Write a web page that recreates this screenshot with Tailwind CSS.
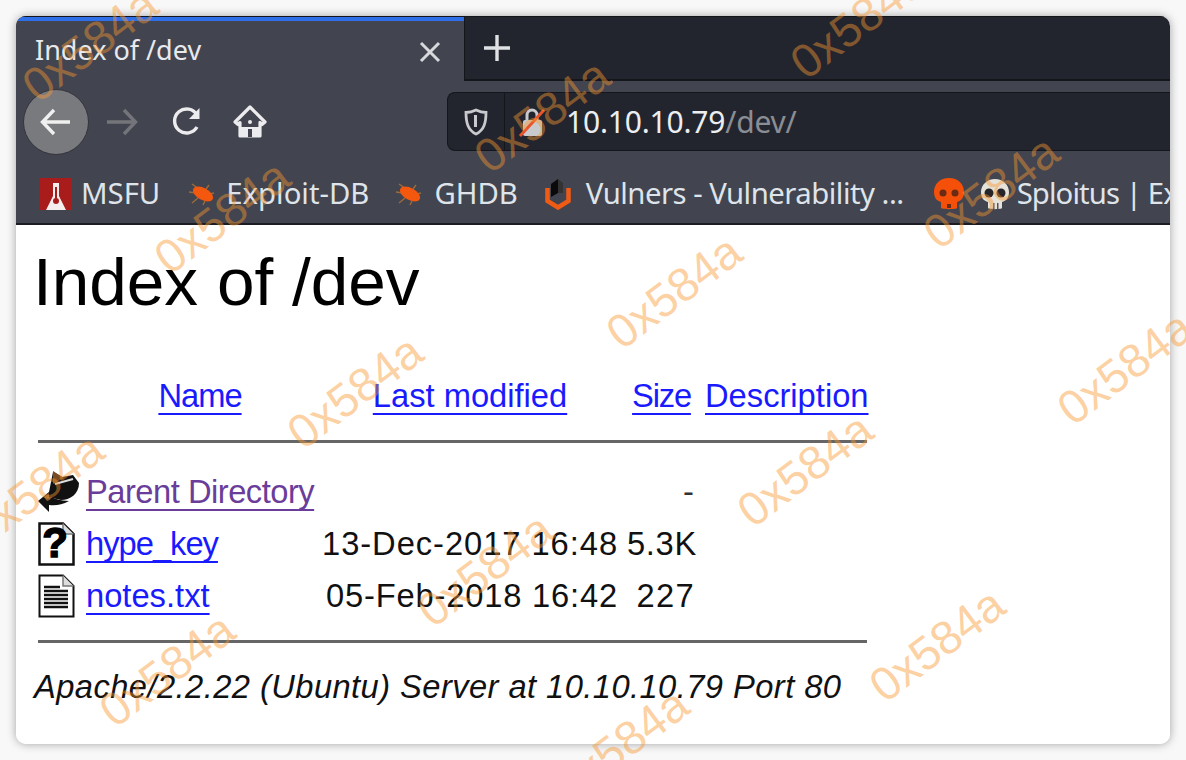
<!DOCTYPE html>
<html>
<head>
<meta charset="utf-8">
<script src="https://cdn.jsdelivr.net/npm/@tailwindcss/browser@4"></script>
</head>
<body class="bg-[#f8f8f8] overflow-hidden">
<div class="relative w-[1186px] h-[760px] p-4 overflow-hidden">
  <div class="w-[1154px] h-[728px] rounded-[10px] overflow-hidden bg-white shadow-[0_0_10px_rgba(0,0,0,0.35)] flex flex-col font-['Liberation_Sans',sans-serif]">
    <!-- tab row -->
    <div class="h-[65px] flex bg-[#23252e] border-t border-[#15161b] shrink-0 font-['Noto_Sans',sans-serif]">
      <div class="w-[448px] bg-[#42444f] border-t-[4px] border-[#2f6fe8] flex items-center pl-[19px] pr-[22px] justify-between">
        <span class="text-[27px] text-[#e8e9ec] mt-[-1px] whitespace-nowrap">Index of /dev</span>
        <svg width="24" height="24" viewBox="0 0 24 24" class="mt-[2px]"><path d="M3 3 21 21M21 3 3 21" stroke="#d8d9dc" stroke-width="3"/></svg>
      </div>
      <div class="flex-1 border-l border-[#15161b] border-b-2 pl-[19px] flex items-center">
        <svg width="26" height="26" viewBox="0 0 26 26"><path d="M13 0V26M0 13H26" stroke="#e0e1e4" stroke-width="3.4"/></svg>
      </div>
    </div>
    <!-- nav row -->
    <div class="h-[71px] bg-[#42444f] flex items-start shrink-0 relative">
      <div class="w-[431px] h-full flex items-center pl-[7px] pt-[11px] shrink-0">
        <div class="w-[66px] h-[66px] rounded-full bg-[#797a7e] border border-[#33343c] flex items-center justify-center">
          <svg width="32" height="28" viewBox="0 0 32 28" fill="none"><path d="M30 14H3M14 2 2.500 14 14 26" stroke="#f0f0f0" stroke-width="3.400"/></svg>
        </div>
        <svg width="32" height="28" viewBox="0 0 32 28" fill="none" class="ml-[17px]"><path d="M1 14H29M18 2 29.500 14 18 26" stroke="#74757b" stroke-width="3.400"/></svg>
        <svg width="32" height="32" viewBox="0 0 32 32" fill="none" class="ml-[33px]"><path d="M26 21A12 12 0 1 1 26 9" stroke="#ececee" stroke-width="3.400"/><path d="M28.500 2V13H18Z" fill="#ececee"/></svg>
        <svg width="34" height="34" viewBox="0 0 34 34" class="ml-[30px]"><path d="M17 2 32 17 29 19.500 27 17.500V31H7V17.500L5 19.500 2 17Z" fill="none" stroke="#ececee" stroke-width="3.200" stroke-linejoin="round"/><path d="M7 22H27V32H7Z" fill="#ececee"/><path d="M15 24h4v8h-4z" fill="#42444f"/><circle cx="17" cy="17" r="2" fill="#ececee"/></svg>
      </div>
      <div class="flex-1 h-[59px] mt-[11px] bg-[#23252e] border border-r-0 border-[#15161b] rounded-l-[8px] flex items-center font-['Noto_Sans',sans-serif]">
        <div class="w-[57px] h-full flex items-center justify-center border-r border-[#15161b] shrink-0">
          <svg width="24" height="28" viewBox="0 0 24 28" fill="none"><path d="M12 2C8 4 5 4.500 2 4.500 2 15 4 22 12 26 20 22 22 15 22 4.500 19 4.500 16 4 12 2Z" stroke="#c9cacd" stroke-width="2.800"/><path d="M11.500 7V19" stroke="#c9cacd" stroke-width="3"/></svg>
        </div>
        <svg width="30" height="32" viewBox="0 0 30 32" class="ml-[12px] shrink-0"><path d="M10 14V9A5 5 0 0 1 20 9V14" fill="none" stroke="#c9cacd" stroke-width="3"/><rect x="6" y="14" width="19" height="16" rx="2" fill="#c9cacd"/><path d="M3 30 27 4" stroke="#e8542a" stroke-width="3"/></svg>
        <span class="ml-[19px] text-[30px] tracking-[-0.2px] text-[#eceef0] whitespace-nowrap">10.10.10.79<span class="text-[#8b8d94]">/dev/</span></span>
      </div>
    </div>
    <!-- bookmarks -->
    <div class="h-[73px] bg-[#42444f] border-b-2 border-[#1c1d22] flex items-center pl-[24px] pt-[12px] shrink-0 overflow-hidden whitespace-nowrap text-[29.300px] text-[#dfe4ea] font-['Noto_Sans',sans-serif]">
      <svg width="32" height="32" viewBox="0 0 32 32" class="shrink-0"><rect width="32" height="32" fill="#a81c1c"/><path d="M13 5h6v13l7 14H6l7-14Z" fill="#f4eeee"/><path d="M15 9h2v12h-2z" fill="#a81c1c"/><circle cx="16" cy="23" r="3" fill="#a81c1c"/></svg>
      <span class="ml-[9px]">MSFU</span>
      <svg width="32" height="28" viewBox="0 0 32 28" class="ml-[27px] shrink-0"><path d="M5 4 12 9M2 12 9 13M5 23 11 18M16 25 18 21M27 13 23 14M22 5 19 9" stroke="#9a6b3c" stroke-width="1.500"/><ellipse cx="16" cy="14" rx="11" ry="6" transform="rotate(28 16 14)" fill="#f4580f"/></svg>
      <span class="ml-[7px]">Exploit-DB</span>
      <svg width="32" height="28" viewBox="0 0 32 28" class="ml-[25px] shrink-0"><path d="M5 4 12 9M2 12 9 13M5 23 11 18M16 25 18 21M27 13 23 14M22 5 19 9" stroke="#9a6b3c" stroke-width="1.500"/><ellipse cx="16" cy="14" rx="11" ry="6" transform="rotate(28 16 14)" fill="#f4580f"/></svg>
      <span class="ml-[8px]">GHDB</span>
      <svg width="26" height="32" viewBox="0 0 26 32" class="ml-[27px] shrink-0"><path d="M13 1 6 6V19L13 15Z" fill="#0a0a0a"/><path d="M13 1 18 5V15H13Z" fill="#333"/><path d="M2.500 10V23L13 29.500 23.500 23V10" fill="none" stroke="#ef5a14" stroke-width="4.500"/></svg>
      <span class="ml-[15px] tracking-[-0.5px]">Vulners - Vulnerability ...</span>
      <svg width="32" height="34" viewBox="0 0 32 34" class="ml-[29px] shrink-0"><path d="M16 1C7 1 1 7 1 15 1 21 4 24 8 25V31C8 32.500 24 32.500 24 31V25C28 24 31 21 31 15 31 7 25 1 16 1Z" fill="#f4500a"/><circle cx="10" cy="16" r="3.500" fill="#6a2a14"/><circle cx="22" cy="16" r="3.500" fill="#6a2a14"/><path d="M14 27h4v4h-4z" fill="#6a2a14"/></svg>
      <svg width="30" height="32" viewBox="0 0 30 32" class="ml-[15px] shrink-0"><path d="M15 1C7 1 1 7 1 14 1 20 4 23 8 24V30C8 31.500 22 31.500 22 30V24C26 23 29 20 29 14 29 7 23 1 15 1Z" fill="#e5e2da"/><circle cx="9" cy="15" r="4.500" fill="#26262a"/><circle cx="21" cy="15" r="4.500" fill="#26262a"/><path d="M13 25h1.500v6H13zM17 25h1.500v6H17z" fill="#555"/></svg>
      <span class="ml-[7px] tracking-[-0.9px]">Sploitus | Exploits</span>
    </div>
    <!-- page -->
    <div class="flex-1 bg-white text-[32.7px] text-[#111] pl-[22px] relative">
      <h1 class="text-[67.5px] leading-[76px] ml-[-5px] mt-[19px] text-black">Index of /dev</h1>
      <div class="grid grid-cols-[40px_228px_296px_71px_162px] gap-x-2 mt-[50px] w-[830px] leading-[52px]">
        <div></div>
        <a class="text-center text-[#1a1aff] tracking-[-1px] underline underline-offset-[6px] decoration-2 [text-decoration-skip-ink:none]">Name</a>
        <a class="text-center text-[#1a1aff] underline underline-offset-[6px] decoration-2 [text-decoration-skip-ink:none]">Last modified</a>
        <a class="text-center text-[#1a1aff] tracking-[-1.2px] underline underline-offset-[6px] decoration-2 [text-decoration-skip-ink:none]">Size</a>
        <a class="text-center text-[#1a1aff] underline underline-offset-[6px] decoration-2 [text-decoration-skip-ink:none]">Description</a>
        <div class="col-span-full h-[3px] bg-[#666] mt-[18px] mb-[23px]"></div>

        <svg width="42" height="44" viewBox="0 0 42 44" class="self-center"><path d="M15 2 24 7 35 5 41 13C41 24 32 30 23 30L10 27Z" fill="#111"/><path d="M15 1l11 7-11 6z" fill="#7a4a22"/><path d="M17 14 35 9" stroke="#ddd" stroke-width="2"/><path d="M0 31 11 22V27C17 28 22 31 31 31 24 35 17 36 11 35V42Z" fill="#111"/><path d="M6 27 11 23V27C14 28 13 30 9 31Z" fill="#8a5a2e"/></svg>
        <a class="text-[#6a3d9a] tracking-[-0.5px] underline underline-offset-[6px] decoration-2 [text-decoration-skip-ink:none] justify-self-start whitespace-nowrap">Parent Directory</a>
        <div></div>
        <div class="text-right pr-[3px] text-[#333]">-</div>
        <div></div>

        <svg width="37" height="44" viewBox="0 0 37 44" class="self-center"><path d="M1.500 1.500H25L35.500 12V42.500H1.500Z" fill="#fff" stroke="#111" stroke-width="2.500"/><path d="M25 1.500V12H35.500" fill="#ddd" stroke="#777" stroke-width="1.500"/><text x="17" y="35" text-anchor="middle" font-family="Liberation Sans" font-weight="700" font-size="42" stroke="#000" stroke-width="1.5" fill="#000">?</text></svg>
        <a class="text-[#1a1aff] tracking-[-1px] underline underline-offset-[6px] decoration-2 [text-decoration-skip-ink:none] justify-self-start">hype_key</a>
        <div class="text-right whitespace-nowrap tracking-[0.95px]">13-Dec-2017 16:48</div>
        <div class="text-right tracking-[0.7px]">5.3K</div>
        <div></div>

        <svg width="37" height="44" viewBox="0 0 37 44" class="self-center"><path d="M1.500 1.500H25L35.500 12V42.500H1.500Z" fill="#fff" stroke="#111" stroke-width="2"/><path d="M25 1.500V12H35.500" fill="#ddd" stroke="#777" stroke-width="1.500"/><path d="M6 13H22M6 17H30M6 21H30M6 25H30M6 29H30M6 33H30" stroke="#111" stroke-width="2.400"/></svg>
        <a class="text-[#1a1aff] underline underline-offset-[6px] decoration-2 [text-decoration-skip-ink:none] justify-self-start">notes.txt</a>
        <div class="text-right whitespace-nowrap tracking-[0.82px]">05-Feb-2018 16:42</div>
        <div class="text-right pr-[2px] tracking-[1.3px]">227</div>
        <div></div>

        <div class="col-span-full h-[3px] bg-[#666] mt-[18px]"></div>
      </div>
      <address class="italic text-[#111] mt-[22px] ml-[-4px] leading-[44px] whitespace-nowrap tracking-[0.43px]">Apache/2.2.22 (Ubuntu) Server at 10.10.10.79 Port 80</address>
    </div>
  </div>

  <!-- watermarks -->
  <span class="absolute left-[90px] top-[45px] -translate-x-1/2 -translate-y-1/2 -rotate-[37deg] text-[47px] font-['Liberation_Sans',sans-serif] text-[#f9982f]/45 pointer-events-none">0x584a</span>
  <span class="absolute left-[858px] top-[22px] -translate-x-1/2 -translate-y-1/2 -rotate-[37deg] text-[47px] font-['Liberation_Sans',sans-serif] text-[#f9982f]/45 pointer-events-none">0x584a</span>
  <span class="absolute left-[542px] top-[116px] -translate-x-1/2 -translate-y-1/2 -rotate-[37deg] text-[47px] font-['Liberation_Sans',sans-serif] text-[#f9982f]/45 pointer-events-none">0x584a</span>
  <span class="absolute left-[222px] top-[217px] -translate-x-1/2 -translate-y-1/2 -rotate-[37deg] text-[47px] font-['Liberation_Sans',sans-serif] text-[#f9982f]/45 pointer-events-none">0x584a</span>
  <span class="absolute left-[991px] top-[192px] -translate-x-1/2 -translate-y-1/2 -rotate-[37deg] text-[47px] font-['Liberation_Sans',sans-serif] text-[#f9982f]/45 pointer-events-none">0x584a</span>
  <span class="absolute left-[674px] top-[292px] -translate-x-1/2 -translate-y-1/2 -rotate-[37deg] text-[47px] font-['Liberation_Sans',sans-serif] text-[#f9982f]/45 pointer-events-none">0x584a</span>
  <span class="absolute left-[355px] top-[392px] -translate-x-1/2 -translate-y-1/2 -rotate-[37deg] text-[47px] font-['Liberation_Sans',sans-serif] text-[#f9982f]/45 pointer-events-none">0x584a</span>
  <span class="absolute left-[1125px] top-[368px] -translate-x-1/2 -translate-y-1/2 -rotate-[37deg] text-[47px] font-['Liberation_Sans',sans-serif] text-[#f9982f]/45 pointer-events-none">0x584a</span>
  <span class="absolute left-[805px] top-[470px] -translate-x-1/2 -translate-y-1/2 -rotate-[37deg] text-[47px] font-['Liberation_Sans',sans-serif] text-[#f9982f]/45 pointer-events-none">0x584a</span>
  <span class="absolute left-[36px] top-[490px] -translate-x-1/2 -translate-y-1/2 -rotate-[37deg] text-[47px] font-['Liberation_Sans',sans-serif] text-[#f9982f]/45 pointer-events-none">0x584a</span>
  <span class="absolute left-[485px] top-[570px] -translate-x-1/2 -translate-y-1/2 -rotate-[37deg] text-[47px] font-['Liberation_Sans',sans-serif] text-[#f9982f]/45 pointer-events-none">0x584a</span>
  <span class="absolute left-[937px] top-[645px] -translate-x-1/2 -translate-y-1/2 -rotate-[37deg] text-[47px] font-['Liberation_Sans',sans-serif] text-[#f9982f]/45 pointer-events-none">0x584a</span>
  <span class="absolute left-[167px] top-[670px] -translate-x-1/2 -translate-y-1/2 -rotate-[37deg] text-[47px] font-['Liberation_Sans',sans-serif] text-[#f9982f]/45 pointer-events-none">0x584a</span>
  <span class="absolute left-[621px] top-[745px] -translate-x-1/2 -translate-y-1/2 -rotate-[37deg] text-[47px] font-['Liberation_Sans',sans-serif] text-[#f9982f]/45 pointer-events-none">0x584a</span>
</div>
</body>
</html>
